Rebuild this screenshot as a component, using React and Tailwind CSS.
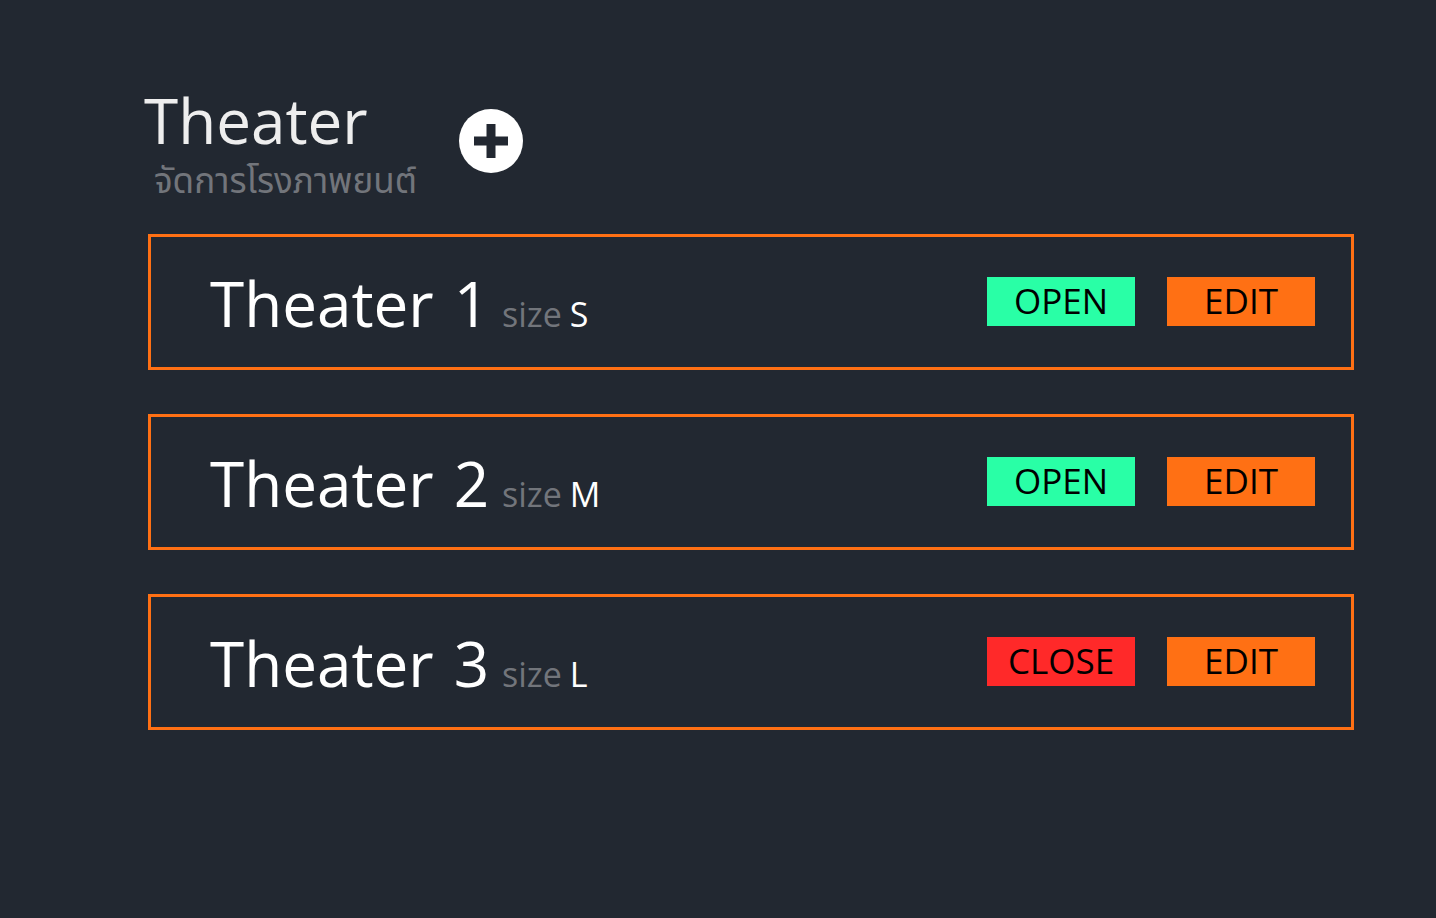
const theaters = [
  { id: 1, size: "S", open: true },
  { id: 2, size: "M", open: true },
  { id: 3, size: "L", open: false },
];

function TheaterRow({ id, size, open }) {
  return (
    <li className="flex h-[136px] items-center justify-between border-3 border-[#ff7014] pb-px pl-[59px] pr-9">
      <div className="flex items-baseline pt-0.5">
        <h2 className="flex w-[276px] gap-5 text-[62px] leading-[72px] text-white">
          <span>Theater</span>
          <span>{id}</span>
        </h2>
        <p className="ml-4 flex gap-2 text-[34px] leading-10 text-white">
          <span className="text-[#72757b]">size</span>
          <span>{size}</span>
        </p>
      </div>
      <div className="flex gap-8">
        <button type="button" className={`h-[49px] w-[148px] pb-px text-[35px] leading-[48px] text-black ${open ? "bg-[#29ffa6]" : "bg-[#ff2929]"}`}>
          {open ? "OPEN" : "CLOSE"}
        </button>
        <button type="button" className="h-[49px] w-[148px] bg-[#ff7014] pb-px text-[35px] leading-[48px] text-black">
          EDIT
        </button>
      </div>
    </li>
  );
}

export default function App() {
  return (
    <main className="min-h-screen bg-[#222831] pb-16 pl-[148px] pr-[82px] pt-[84px] font-['Open_Sans','Noto_Sans_Thai','Noto_Sans',sans-serif]">
      <header className="flex h-[150px] items-start gap-[42px]">
        <div>
          <h1 className="-ml-1 pb-1 text-[62px] leading-[72px] text-[#eeeeee]">Theater</h1>
          <p className="pl-1.5 text-[35px] leading-10 text-[#72757b]">จัดการโรงภาพยนต์</p>
        </div>
        <button type="button" aria-label="Add theater" className="mt-[25px] size-16">
          <svg viewBox="0 0 64 64" className="size-full" aria-hidden="true">
            <circle cx="32" cy="32" r="32" fill="#fff" />
            <path d="M27.5 15h9v12.5H49v9H36.5V49h-9V36.500H15v-9h12.500z" fill="#222831" />
          </svg>
        </button>
      </header>
      <ul className="flex flex-col gap-11">
        {theaters.map((t) => <TheaterRow key={t.id} {...t} />)}
      </ul>
    </main>
  );
}
